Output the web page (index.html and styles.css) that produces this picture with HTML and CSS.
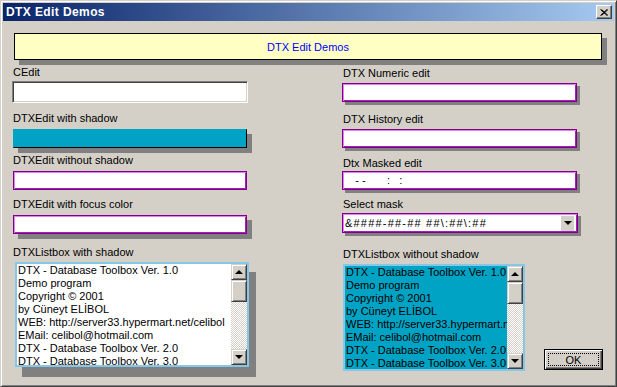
FILE: index.html
```html
<!DOCTYPE html>
<html lang="en">
<head>
    <meta charset="UTF-8">
    <title>DTX Edit Demos</title>
    <link rel="stylesheet" href="styles.css">
</head>
<body>

    <div class="window">
        <div class="titlebar">
            <span class="title">DTX Edit Demos</span>
            <button class="close-btn" aria-label="Close">
                <svg width="8" height="7" viewBox="0 0 8 7">
                    <path d="M0.5 0.5 L7 6.5 M1.5 0.5 L8 6.5 M7 0.5 L0.5 6.5 M8 0.5 L1.5 6.5" stroke="#000" stroke-width="1"/>
                </svg>
            </button>
        </div>

        <div class="client">
            <div class="banner">DTX Edit Demos</div>

            <div class="columns">
                <!-- left column -->
                <div class="col col-left">
                    <div class="label">CEdit</div>
                    <div class="edit sunken"></div>

                    <div class="label gap-9">DTXEdit with shadow</div>
                    <div class="edit teal shadow"></div>

                    <div class="label gap-6">DTXEdit without shadow</div>
                    <div class="edit purple"></div>

                    <div class="label gap-8">DTXEdit with focus color</div>
                    <div class="edit purple shadow"></div>

                    <div class="label gap-12">DTXListbox with shadow</div>
                    <div class="listbox white list-shadow">
                        <div class="items">
                            <div>DTX - Database Toolbox Ver. 1.0</div>
                            <div>Demo program</div>
                            <div>Copyright © 2001</div>
                            <div>by Cüneyt ELİBOL</div>
                            <div>WEB: http://server33.hypermart.net/celibol</div>
                            <div>EMail: celibol@hotmail.com</div>
                            <div>DTX - Database Toolbox Ver. 2.0</div>
                            <div>DTX - Database Toolbox Ver. 3.0</div>
                        </div>
                        <div class="scrollbar">
                            <div class="sb-btn"><span class="arrow-up"></span></div>
                            <div class="sb-thumb"></div>
                            <div class="sb-track"></div>
                            <div class="sb-btn"><span class="arrow-down"></span></div>
                        </div>
                    </div>
                </div>

                <!-- right column -->
                <div class="col col-right">
                    <div class="label first">DTX Numeric edit</div>
                    <div class="edit purple shadow-sm r-edit"></div>

                    <div class="label gap-11">DTX History edit</div>
                    <div class="edit purple shadow-sm r-edit"></div>

                    <div class="label gap-9">Dtx Masked edit</div>
                    <div class="edit purple shadow-sm r-edit masked">   - -       :   :</div>

                    <div class="label gap-8">Select mask</div>
                    <div class="edit purple shadow-sm combo">
                        <span class="combo-text">&amp;####-##-## ##\:##\:##</span>
                        <span class="combo-btn"><span class="arrow-down"></span></span>
                    </div>

                    <div class="label gap-15">DTXListbox without shadow</div>
                    <div class="bottom-row">
                        <div class="listbox teal-list">
                            <div class="items">
                                <div>DTX - Database Toolbox Ver. 1.0</div>
                                <div>Demo program</div>
                                <div>Copyright © 2001</div>
                                <div>by Cüneyt ELİBOL</div>
                                <div>WEB: http://server33.hypermart.net/celibol</div>
                                <div>EMail: celibol@hotmail.com</div>
                                <div>DTX - Database Toolbox Ver. 2.0</div>
                                <div>DTX - Database Toolbox Ver. 3.0</div>
                            </div>
                            <div class="scrollbar">
                                <div class="sb-btn"><span class="arrow-up"></span></div>
                                <div class="sb-thumb"></div>
                                <div class="sb-track"></div>
                                <div class="sb-btn"><span class="arrow-down"></span></div>
                            </div>
                        </div>
                        <button class="ok-btn"><span class="focus">OK</span></button>
                    </div>
                </div>
            </div>
        </div>
    </div>

</body>
</html>
```

FILE: styles.css
```css
body {
    margin: 0;
    background-color: #d4d0c8;
    font-family: "Liberation Sans", Arial, sans-serif;
    font-size: 11px;
    color: #000;
}

/* --- Window frame --- */
.window {
    box-sizing: border-box;
    width: 617px;
    height: 387px;
    padding: 1px;
    border: 1px solid;
    border-color: #d4d0c8 #404040 #404040 #d4d0c8;
    box-shadow: inset 1px 1px 0 #fff, inset -1px -1px 0 #808080;
    background-color: #d4d0c8;
    overflow: hidden;
}

.titlebar {
    height: 18px;
    margin: 1px 1px 0 1px;
    display: flex;
    align-items: center;
    justify-content: space-between;
    background: linear-gradient(to right, #0a246a, #a6caf0);
    padding: 0 2px 0 3px;
}

.title {
    color: #fff;
    font-weight: bold;
    font-size: 12px;
    letter-spacing: 0.4px;
}

.close-btn {
    box-sizing: border-box;
    width: 16px;
    height: 14px;
    padding: 0;
    display: flex;
    align-items: center;
    justify-content: center;
    background-color: #d4d0c8;
    border: 1px solid;
    border-color: #fff #404040 #404040 #fff;
    box-shadow: inset -1px -1px 0 #808080;
}

/* --- Client area --- */
.client {
    padding: 0 0 0 10px;
}

.banner {
    box-sizing: border-box;
    margin: 12px 0 0 2px;
    width: 588px;
    height: 27px;
    border: 1px solid #000;
    background-color: #ffffc4;
    color: #0000ff;
    display: flex;
    align-items: center;
    justify-content: center;
    box-shadow: 5px 5px 0 #808080;
}

.columns {
    display: flex;
    margin-top: 6px;
}

.col {
    display: flex;
    flex-direction: column;
    align-items: flex-start;
}

.col-left {
    width: 236px;
}

.col-right {
    width: 260px;
    margin-left: 94px;
}

.label {
    height: 13px;
    line-height: 13px;
    margin-left: 1px;
    white-space: nowrap;
}

.first { margin-top: 1px; }
.gap-6 { margin-top: 6px; }
.gap-8 { margin-top: 8px; }
.gap-9 { margin-top: 9px; }
.gap-11 { margin-top: 11px; }
.gap-12 { margin-top: 12px; }
.gap-15 { margin-top: 15px; }

/* --- Edits --- */
.edit {
    box-sizing: border-box;
    width: 234px;
    height: 19px;
    margin-top: 4px;
    margin-left: 1px;
    background-color: #fff;
}

.sunken {
    width: 236px;
    height: 22px;
    margin-top: 2px;
    margin-left: 0;
    border: 1px solid;
    border-color: #808080 #fff #fff #808080;
    box-shadow: inset 1px 1px 0 #404040, inset -1px -1px 0 #d4d0c8;
}

.teal {
    background-color: #00a3c4;
    border: 1px solid;
    border-color: #00a3c4 #000 #000 #00a3c4;
}

.purple {
    border: 1px solid #800080;
    box-shadow: inset 1px 1px 0 #e080ff, inset -1px -1px 0 #a020c0;
}

.shadow {
    box-shadow: 5px 5px 0 #808080;
}

.purple.shadow {
    box-shadow: inset 1px 1px 0 #e080ff, inset -1px -1px 0 #a020c0, 5px 5px 0 #808080;
}

.purple.shadow-sm {
    box-shadow: inset 1px 1px 0 #e080ff, inset -1px -1px 0 #a020c0, 3px 3px 0 #808080;
}

.r-edit {
    width: 235px;
    margin-left: 0;
    margin-top: 3px;
}

.masked {
    margin-top: 1px;
    white-space: pre;
    line-height: 17px;
    padding-left: 3px;
}

.combo {
    width: 236px;
    height: 20px;
    margin-top: 2px;
    margin-left: 0;
    display: flex;
    align-items: center;
    justify-content: space-between;
    padding: 0 3px 0 2px;
}

.combo-text {
    letter-spacing: 1.2px;
}

.combo-btn {
    width: 13px;
    height: 15px;
    background-color: #d4d0c8;
    display: flex;
    align-items: center;
    justify-content: center;
}

.arrow-up,
.arrow-down {
    width: 0;
    height: 0;
    border-left: 4px solid transparent;
    border-right: 4px solid transparent;
}

.arrow-up {
    border-bottom: 4px solid #000;
}

.arrow-down {
    border-top: 4px solid #000;
}

/* --- Listboxes --- */
.listbox {
    box-sizing: border-box;
    display: flex;
    border: 2px solid #86c6e6;
    overflow: hidden;
}

.white {
    width: 234px;
    height: 105px;
    margin-top: 3px;
    margin-left: 3px;
    background-color: #fff;
}

.list-shadow {
    box-shadow: 7px 10px 0 #808080;
}

.teal-list {
    width: 182px;
    height: 107px;
    margin-left: 1px;
    background-color: #00a3c4;
}

.items {
    flex: 1;
    min-width: 0;
    overflow: hidden;
    padding-left: 1px;
    line-height: 13px;
    white-space: nowrap;
}

.scrollbar {
    width: 16px;
    flex-shrink: 0;
    display: flex;
    flex-direction: column;
}

.sb-btn,
.sb-thumb {
    box-sizing: border-box;
    background-color: #d4d0c8;
    border: 1px solid;
    border-color: #d4d0c8 #404040 #404040 #d4d0c8;
    box-shadow: inset 1px 1px 0 #fff, inset -1px -1px 0 #808080;
}

.sb-btn {
    height: 16px;
    display: flex;
    align-items: center;
    justify-content: center;
}

.sb-thumb {
    height: 22px;
}

.sb-track {
    flex: 1;
    background: repeating-conic-gradient(#fff 0 25%, #d4d0c8 0 50%) 0 0 / 2px 2px;
}

/* --- Buttons --- */
.bottom-row {
    display: flex;
    align-items: flex-end;
    margin-top: 3px;
}

.ok-btn {
    box-sizing: border-box;
    width: 59px;
    height: 21px;
    margin-left: 19px;
    margin-bottom: 1px;
    padding: 2px;
    font-family: "Liberation Sans", Arial, sans-serif;
    font-size: 11px;
    background-color: #d4d0c8;
    border: 1px solid #000;
    box-shadow: inset 1px 1px 0 #fff, inset -1px -1px 0 #404040, inset -2px -2px 0 #808080;
    display: flex;
}

.focus {
    flex: 1;
    display: flex;
    align-items: center;
    justify-content: center;
    margin: 1px;
    border: 1px dotted #000;
}
```
